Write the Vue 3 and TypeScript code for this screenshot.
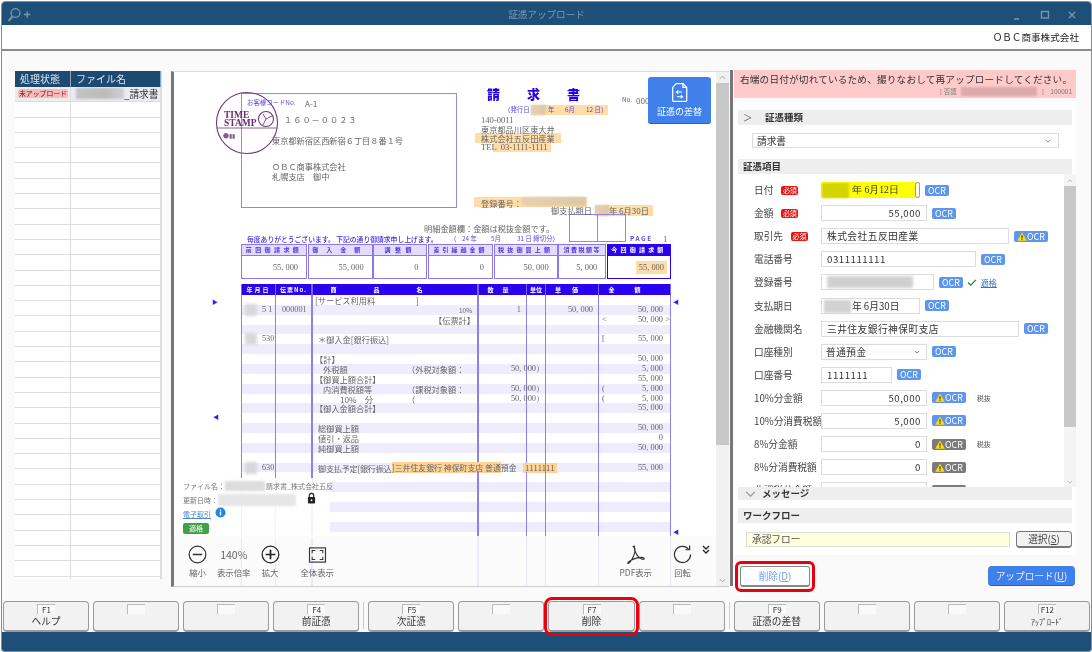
<script setup lang="ts">
type Mark = { x: number; y: number; text: string; kind: string }
type Box = { x: number; y: number; w: number; h: number; kind: string }
type Sum = { title: string; value: string; width: number; track: number; now?: boolean }
type Line = { date?: string; no?: string; name?: string; indent?: number; tax?: string; taxValue?: string; qty?: string; price?: string; open?: string; amount?: string; close?: string; paid?: boolean }
type Field = { label: string; req?: boolean; value?: string; width: number; right?: boolean; warn?: boolean; gray?: boolean; kind?: string; note?: string; valid?: boolean; blur?: number }

const files = Array.from({ length: 32 })

// page coordinates of everything printed on the invoice
const place = (x: number, y: number) => ({ left: `${x - 174}px`, top: `${y - 72}px` })
const size = (b: Box) => ({ ...place(b.x, b.y), width: `${b.w}px`, height: `${b.h}px` })

const boxes: Box[] = [
  { x: 531, y: 105, w: 77, h: 10, kind: 'hi' },
  { x: 531, y: 105, w: 15, h: 10, kind: 'red' },
  { x: 475, y: 133, w: 86, h: 10, kind: 'hi' },
  { x: 493, y: 143, w: 58, h: 9, kind: 'hi' },
  { x: 474, y: 197, w: 113, h: 10, kind: 'hi' },
  { x: 522, y: 197, w: 64, h: 9, kind: 'red' },
  { x: 595, y: 205, w: 58, h: 11, kind: 'hi' },
  { x: 595, y: 205, w: 14, h: 11, kind: 'red' },
  { x: 241, y: 93, w: 216, h: 115, kind: 'frame' },
  { x: 569, y: 214, w: 29, h: 28, kind: 'frame' },
  { x: 597, y: 214, w: 29, h: 28, kind: 'frame' },
]

const marks: Mark[] = [
  { x: 247, y: 103, text: 'お客様コードNo.', kind: 'blue' },
  { x: 305, y: 103, text: 'A-1', kind: 'doc' },
  { x: 284, y: 119, text: '１６０－００２３', kind: 'doc wide' },
  { x: 272, y: 140, text: '東京都新宿区西新宿６丁目８番１号', kind: 'doc' },
  { x: 272, y: 166, text: 'ＯＢＣ商事株式会社', kind: 'doc' },
  { x: 272, y: 176, text: '札幌支店　御中', kind: 'doc' },
  { x: 487, y: 93, text: '請求書', kind: 'title' },
  { x: 504, y: 110, text: '（発行日', kind: 'blue' },
  { x: 548, y: 110, text: '年', kind: 'blue' },
  { x: 565, y: 110, text: '6月', kind: 'blue' },
  { x: 586, y: 110, text: '12 日）', kind: 'blue' },
  { x: 622, y: 100, text: 'No.', kind: 'blue' },
  { x: 636, y: 100, text: '000', kind: 'doc' },
  { x: 481, y: 120, text: '140-0011', kind: 'doc num' },
  { x: 481, y: 129, text: '東京都品川区東大井', kind: 'doc' },
  { x: 481, y: 138, text: '株式会社五反田産業', kind: 'doc' },
  { x: 481, y: 147, text: 'TEL  03-1111-1111', kind: 'doc num' },
  { x: 481, y: 203, text: '登録番号：', kind: 'doc' },
  { x: 551, y: 210, text: '御支払期日', kind: 'doc' },
  { x: 609, y: 210, text: '年 6月30日', kind: 'doc' },
  { x: 424, y: 228, text: '明細金額欄：金額は税抜金額です。', kind: 'doc' },
  { x: 247, y: 239, text: '毎度ありがとうございます。 下記の通り御請求申し上げます。', kind: 'blue bold' },
  { x: 450, y: 239, text: '（', kind: 'blue' },
  { x: 462, y: 239, text: '24 年', kind: 'blue' },
  { x: 491, y: 239, text: '5月', kind: 'blue' },
  { x: 517, y: 239, text: '31 日 締切分）', kind: 'blue' },
  { x: 630, y: 239, text: 'PAGE', kind: 'blue spread' },
  { x: 663, y: 239, text: '1', kind: 'doc num' },
  { x: 212, y: 302, text: '▶', kind: 'tick' },
  { x: 213, y: 417, text: '◀', kind: 'tick' },
  { x: 212, y: 532, text: '▶', kind: 'tick faint' },
  { x: 673, y: 302, text: '◀', kind: 'tick' },
  { x: 673, y: 532, text: '◀', kind: 'tick' },
]

const summary: Sum[] = [
  { title: '前回御請求額', value: '55, 000', width: 66, track: 3.4 },
  { title: '御入金額', value: '55, 000', width: 65, track: 8 },
  { title: '調整額', value: '0', width: 54, track: 4.5 },
  { title: '差引繰越金額', value: '0', width: 65, track: 3 },
  { title: '税抜御買上額', value: '50, 000', width: 64, track: 3.2 },
  { title: '消費税額等', value: '5, 000', width: 48, track: 1.5 },
  { title: '今回御請求額', value: '55, 000', width: 64, track: 3.2, now: true },
]

const heads = [
  { text: '年月日', track: 2 },
  { text: '伝票No.', track: 1 },
  { text: '商品名', track: 37 },
  { text: '数量', track: 9 },
  { text: '単位', track: 0 },
  { text: '単価', track: 11 },
  { text: '金額', track: 20 },
]

const lines: Line[] = [
  { name: '[サービス利用料　　　　　]', indent: 2 },
  { date: '5  1', no: '000001', tax: '10%', qty: '1', price: '50, 000', amount: '50, 000' },
  { name: '【伝票計】', indent: 121, open: '<', amount: '50, 000', close: '>' },
  {},
  { date: '530', name: '＊御入金[銀行振込]', open: '[', amount: '55, 000' },
  {},
  { name: '【計】', indent: 2, amount: '50, 000' },
  { name: '外税額', indent: 10, tax: '（外税対象額：', taxValue: '50, 000）', amount: '5, 000' },
  { name: '【御買上額合計】', indent: 2, amount: '55, 000' },
  { name: '内消費税額等', indent: 10, tax: '（課税対象額：', taxValue: '50, 000）', open: '(', amount: '5, 000' },
  { name: '10%　分', indent: 27, tax: '（', taxValue: '50, 000）', open: '(', amount: '5, 000' },
  { name: '【御入金額合計】', indent: 2, amount: '55, 000' },
  {},
  { name: '総御買上額', amount: '50, 000' },
  { name: '値引・返品', amount: '0' },
  { name: '純御買上額', amount: '50, 000' },
  {},
  { date: '630', name: '御支払予定[銀行振込', paid: true, amount: '55, 000' },
  ...Array.from({ length: 12 }, () => ({})),
]

const fields: Field[] = [
  { label: '日付', req: true, value: '年  6月12日', width: 99, kind: 'date' },
  { label: '金額', req: true, value: '55,000', width: 106, right: true },
  { label: '取引先', req: true, value: '株式会社五反田産業', width: 188, warn: true },
  { label: '電話番号', value: '0311111111', width: 155 },
  { label: '登録番号', width: 113, blur: 86, valid: true },
  { label: '支払期日', value: '年  6月30日', width: 99, kind: 'date2' },
  { label: '金融機関名', value: '三井住友銀行神保町支店', width: 198 },
  { label: '口座種別', value: '普通預金', width: 106, kind: 'select' },
  { label: '口座番号', value: '1111111', width: 71 },
  { label: '10%分金額', value: '50,000', width: 106, right: true, warn: true, note: '税抜' },
  { label: '10%分消費税額', value: '5,000', width: 106, right: true, warn: true },
  { label: '8%分金額', value: '0', width: 106, right: true, warn: true, gray: true, note: '税抜' },
  { label: '8%分消費税額', value: '0', width: 106, right: true, warn: true, gray: true },
  { label: '非課税分金額', value: '0', width: 106, right: true, warn: true, gray: true },
]

const keys = [
  [{ key: 'F1', text: 'ヘルプ' }, { key: '' }, { key: '' }, { key: 'F4', text: '前証憑' }],
  [{ key: 'F5', text: '次証憑' }, { key: '' }, { key: 'F7', text: '削除', hl: true }, { key: '' }],
  [{ key: 'F9', text: '証憑の差替' }, { key: '' }, { key: '' }, { key: 'F12', text: 'ｱｯﾌﾟﾛｰﾄﾞ', small: true }],
]
</script>

<template>
  <div class="window">
    <header class="titlebar">
      <svg class="find" viewBox="0 0 26 16" width="26" height="16" fill="none" stroke="#7d95a9" stroke-width="1.3">
        <circle cx="8.5" cy="6" r="4.4" />
        <path d="M5.5 9.500 1.500 14" stroke-width="2" />
        <path d="M17 7.500h6.500M20.200 4.200v6.600" />
      </svg>
      <span class="caption">証憑アップロード</span>
      <div class="controls">
        <svg viewBox="0 0 70 12" width="70" height="12" fill="none" stroke="#7d95a9" stroke-width="1.4">
          <path d="M1 10h5" />
          <rect x="28.500" y="2.500" width="7" height="6.500" />
          <path d="M56 3l6 6M62 3l-6 6" />
        </svg>
      </div>
    </header>
    <div class="company">ＯＢＣ商事株式会社</div>

    <main class="main">
      <section class="files">
        <div class="file-row head">
          <span>処理状態</span>
          <span>ファイル名</span>
        </div>
        <div class="file-row current">
          <span><em class="status">未アップロード</em></span>
          <span class="file-name"><i class="redact"></i>_請求書</span>
        </div>
        <div v-for="(_, i) in files" :key="i" class="file-row">
          <span></span>
          <span></span>
        </div>
      </section>

      <section class="viewer">
        <div class="paper">
          <div v-for="(b, i) in boxes" :key="i" class="box" :class="b.kind" :style="size(b)"></div>

          <svg class="stamp" viewBox="0 0 64 64" width="64" height="64" fill="none" stroke="#75367f">
            <circle cx="32" cy="32" r="30.500" stroke-width="1.100" />
            <path d="M2 37h60" stroke-width=".8" />
            <circle cx="51" cy="28" r="7.500" stroke-width="1.100" />
            <path d="M51 28l-3-5M51 28l6-3M51 28l-3 6" stroke-width=".9" />
            <text x="9" y="27" class="stamp-text">TIME</text>
            <text x="9" y="35" class="stamp-text">STAMP</text>
            <text x="8" y="47" class="stamp-small">●▮▮</text>
          </svg>

          <span v-for="(m, i) in marks" :key="i" class="mark" :class="m.kind" :style="place(m.x, m.y)">{{ m.text }}</span>

          <div class="summary">
            <div v-for="s in summary" :key="s.title" class="sum" :class="{ now: s.now }" :style="{ width: `${s.width}px` }">
              <div class="sum-title" :style="{ letterSpacing: `${s.track}px` }">{{ s.title }}</div>
              <div class="sum-value"><b>{{ s.value }}</b></div>
            </div>
          </div>

          <div class="detail">
            <div class="detail-row detail-head">
              <span v-for="h in heads" :key="h.text" :style="{ letterSpacing: `${h.track}px` }">{{ h.text }}</span>
            </div>
            <div v-for="(l, i) in lines" :key="i" class="detail-row" :class="{ striped: i % 2 === 1 && i < 25 }">
              <span class="date"><i v-if="l.date" class="date-red"></i>{{ l.date }}</span>
              <span class="ctr">{{ l.no }}</span>
              <span class="name" :class="{ squeeze: l.paid }" :style="{ paddingLeft: `${l.indent ?? 5}px` }">
                {{ l.name }}<em v-if="l.tax" class="tax" :class="{ pct: l.tax === '10%' }">{{ l.tax }}</em>
                <em v-if="l.paid" class="paid"><b>]三井住友銀行 神保町支店 普通</b>預金</em>
              </span>
              <span class="num">{{ l.qty }}<em v-if="l.taxValue" class="tax-value">{{ l.taxValue }}</em><b v-if="l.paid" class="acct">1111111</b></span>
              <span></span>
              <span class="num">{{ l.price }}</span>
              <span class="num amount"><em v-if="l.open" class="open">{{ l.open }}</em>{{ l.amount }}<em v-if="l.close" class="close">{{ l.close }}</em></span>
            </div>
          </div>
        </div>

        <button class="swap">
          <svg viewBox="0 0 20 24" width="17" height="21" fill="none" stroke="#fff" stroke-width="1.500">
            <path d="M6 1.500h8l4.500 4.500v15a1.500 1.500 0 0 1-1.500 1.500H3.500A1.500 1.500 0 0 1 2 21V6z" />
            <path d="M14 1.500V6h4.500" />
            <path d="M13 11.500H6.500l2-2M6.500 11.500l2 2M7 17h6.500l-2-2M13.500 17l-2 2" stroke-width="1.200" />
          </svg>
          <span>証憑の差替</span>
        </button>

        <div class="doc-info">
          <p><span>ファイル名：</span><i class="redact name-red"></i><span>請求書_株式会社五反</span></p>
          <p><span>更新日時：</span><i class="redact date-info"></i>
            <svg class="lock" viewBox="0 0 10 13" width="9" height="12"><path d="M2.500 6V3.800a2.500 2.500 0 0 1 5 0V6" fill="none" stroke="#222" stroke-width="1.300" /><rect x="1" y="5.500" width="8" height="7" rx="1" fill="#222" /><circle cx="5" cy="9" r="1" fill="#fff" /></svg>
          </p>
          <p><a class="trade">電子取引</a>
            <svg class="info" viewBox="0 0 12 12" width="11" height="11"><circle cx="6" cy="6" r="5.500" fill="#1e88e5" /><path d="M6 5v4M6 2.800v1.200" stroke="#fff" stroke-width="1.400" /></svg>
          </p>
          <p><em class="qualified">適格</em></p>
        </div>

        <div class="tools">
          <div class="tool">
            <svg viewBox="0 0 20 20" width="19" height="19" fill="none" stroke="#333" stroke-width="1.300"><circle cx="10" cy="10" r="8.800" /><path d="M5 10h10" stroke-width="1.800" /></svg>
            <span>縮小</span>
          </div>
          <div class="tool rate"><strong>140%</strong><span>表示倍率</span></div>
          <div class="tool">
            <svg viewBox="0 0 20 20" width="19" height="19" fill="none" stroke="#222" stroke-width="1.300"><circle cx="10" cy="10" r="8.800" /><path d="M5 10h10M10 5v10" stroke-width="1.800" /></svg>
            <span>拡大</span>
          </div>
          <div class="tool fit">
            <svg viewBox="0 0 20 18" width="19" height="16" fill="none" stroke="#333"><rect x="1" y="1" width="18" height="16" stroke-width="1.300" /><path d="M4 7V4h3.500M12.500 4H16v3M16 11v3h-3.500M7.500 14H4v-3" stroke-width="1.200" /></svg>
            <span>全体表示</span>
          </div>
          <div class="spacer"></div>
          <div class="tool">
            <svg viewBox="0 0 20 20" width="19" height="19" fill="none" stroke="#333" stroke-width="1.200"><path d="M9.500 1.500c-1 0-.8 2.500.5 6 1.400 3.500 3 5.500 6 7 2 1 3.500.5 3-.5-.6-1-3.500-1.200-7-.5-4 .8-7 2.300-9 4-1.200 1-1.500 2-.5 1.800 1.500-.3 3.500-3.500 5.500-7.800 1.600-3.600 2.500-10-1-10z" /></svg>
            <span>PDF表示</span>
          </div>
          <div class="tool rotate">
            <svg viewBox="0 0 20 20" width="19" height="19" fill="none" stroke="#333" stroke-width="1.300"><path d="M16.500 4.500A8.500 8.500 0 1 0 18.500 10" /><path d="M17.500 .5v4.500H13" /></svg>
            <span>回転</span>
          </div>
          <svg class="more" viewBox="0 0 8 9" width="8" height="9" fill="none" stroke="#222" stroke-width="1.300"><path d="M1 1l3 3 3-3M1 5l3 3 3-3" /></svg>
        </div>

        <div class="doc-scroll">
          <svg viewBox="0 0 8 5" width="7" height="5" fill="none" stroke="#999"><path d="M1 4l3-3 3 3" /></svg>
          <i class="thumb"></i>
          <svg class="down" viewBox="0 0 8 5" width="7" height="5" fill="none" stroke="#999"><path d="M1 1l3 3 3-3" /></svg>
        </div>
      </section>

      <section class="side">
        <div class="alert">
          <p>右端の日付が切れているため、撮りなおして再アップロードしてください。</p>
          <small>[ 否認 <i class="redact"></i> ]　100001</small>
        </div>

        <div class="card">
          <h3 class="bar"><span class="gt">＞</span>証憑種類</h3>
          <div class="kind-select">
            <span>請求書</span>
            <svg viewBox="0 0 8 5" width="6" height="4" fill="none" stroke="#555"><path d="M1 1l3 3 3-3" /></svg>
          </div>
          <h3 class="bar plain">証憑項目</h3>

          <div class="form">
            <div class="form-scroll">
              <div v-for="f in fields" :key="f.label" class="field">
                <label>
                  <span class="label-text">{{ f.label }}</span>
                  <em v-if="f.req" class="req">必須</em>
                </label>
                <div class="input" :class="[f.kind, { right: f.right }]" :style="{ width: `${f.width}px` }">
                  <i v-if="f.kind === 'date' || f.kind === 'date2'" class="date-blur"></i>
                  <i v-if="f.blur" class="value-blur" :style="{ width: `${f.blur}px` }"></i>
                  <span>{{ f.value }}</span>
                  <i v-if="f.kind === 'date'" class="spin"></i>
                  <svg v-if="f.kind === 'select'" viewBox="0 0 8 5" width="6" height="4" fill="none" stroke="#555"><path d="M1 1l3 3 3-3" /></svg>
                </div>
                <span class="ocr" :class="{ gray: f.gray }">
                  <svg v-if="f.warn" viewBox="0 0 12 11" width="10" height="9"><path d="M6 .5 11.800 10.800H.2z" fill="#ffdf00" /><path d="M6 4v3.500M6 8.300v1.200" stroke="#222" stroke-width="1.300" /></svg>OCR
                </span>
                <span v-if="f.note" class="note">{{ f.note }}</span>
                <template v-if="f.valid">
                  <svg class="check" viewBox="0 0 11 8" width="10" height="7" fill="none" stroke="#1b8a3a" stroke-width="1.500"><path d="M1 4l3 3 6-6" /></svg>
                  <a class="valid">適格</a>
                </template>
              </div>
            </div>
            <div class="form-bar">
              <svg viewBox="0 0 8 5" width="6" height="4" fill="none" stroke="#aaa"><path d="M1 4l3-3 3 3" /></svg>
              <i class="thumb"></i>
              <svg class="down" viewBox="0 0 8 5" width="6" height="4" fill="none" stroke="#aaa"><path d="M1 1l3 3 3-3" /></svg>
            </div>
          </div>

          <h3 class="bar msg"><svg viewBox="0 0 12 7" width="11" height="6" fill="none" stroke="#999" stroke-width="1.500"><path d="M1 1l5 5 5-5" /></svg>メッセージ</h3>
          <h3 class="bar plain flow">ワークフロー</h3>
          <div class="flow-row">
            <div class="flow-name">承認フロー</div>
            <button class="pick">選択(<u>S</u>)</button>
          </div>
        </div>

        <div class="actions">
          <div class="danger">
            <button class="remove">削除(<u>D</u>)</button>
          </div>
          <button class="upload">アップロード(<u>U</u>)</button>
        </div>
      </section>
    </main>

    <footer class="fkeys">
      <template v-for="(group, g) in keys" :key="g">
        <i v-if="g > 0" class="sep"></i>
        <div v-for="(k, i) in group" :key="i" class="fkey" :class="{ hl: k.hl }">
          <span class="cap">{{ k.key }}</span>
          <span class="fkey-text" :class="{ small: k.small }">{{ k.text }}</span>
        </div>
      </template>
    </footer>
    <div class="statusbar"></div>
  </div>
</template>

<style>
html,
body {
  margin: 0;
  background: #fff;
  overflow: hidden;
}
</style>

<style scoped>
.window {
  box-sizing: border-box;
  width: 1091px;
  height: 651px;
  margin: 1px 0 0 1px;
  display: flex;
  flex-direction: column;
  overflow: hidden;
  border: 1px solid #8c8c8c;
  border-radius: 4px 4px 3px 3px;
  background: #fafafa;
  color: #333;
  font-family: "Noto Sans CJK JP", "Noto Sans", sans-serif;
  font-size: 9.7px;
  filter: blur(0.3px);
}

p,
h3 {
  margin: 0;
}

em,
i {
  font-style: normal;
}

button {
  font: inherit;
  padding: 0;
}

.redact {
  display: inline-block;
  flex: none;
  background: linear-gradient(90deg, #c4c4c4, #bbb 60%, #d0d0d0);
  filter: blur(1px);
}

.titlebar {
  position: relative;
  flex: none;
  height: 23px;
  display: flex;
  align-items: center;
  justify-content: center;
  background: #1e4f78;
}

.find {
  position: absolute;
  left: 5px;
  top: 5px;
}

.caption {
  color: #7f9bb2;
  font-size: 9.6px;
}

.controls {
  position: absolute;
  right: 8px;
  top: 7px;
  display: flex;
}

.company {
  flex: none;
  height: 24px;
  padding-right: 12px;
  border-bottom: 2px solid #8a8a8a;
  background: #fff;
  line-height: 24px;
  text-align: right;
  font-size: 9.6px;
  color: #222;
}

.main {
  flex: none;
  height: 546px;
  display: flex;
  align-items: flex-start;
  padding: 20px 0 0 13px;
  box-sizing: border-box;
  background: #fafafa;
}

/* file list */
.files {
  flex: none;
  width: 147px;
  height: 508px;
  overflow: hidden;
  background: #fff;
  border-right: 1px solid #ddd;
  box-sizing: border-box;
}

.file-row {
  display: grid;
  grid-template-columns: 56px 1fr;
  height: 15.3px;
  box-sizing: border-box;
  border-bottom: 1.5px solid #ddd;
}

.file-row > span {
  border-right: 1px solid #ddd;
  border-left: 1px solid #ddd;
  margin-left: -1px;
  overflow: hidden;
  white-space: nowrap;
}

.file-row.head {
  height: 16px;
  background: #1c4a73;
  color: #dbe5ee;
  border: 0;
  font-size: 10px;
  line-height: 15px;
}

.file-row.head > span {
  padding-left: 5px;
  border-color: #8fa5b8;
  border-left: 0;
  margin: 0;
}

.file-row.current {
  background: #ebebf2;
  line-height: 14px;
}

.status {
  display: block;
  margin: 2px 2px 0 3px;
  height: 9px;
  border-radius: 2px;
  background: #ffb8b4;
  color: #3a2a2a;
  font-size: 6.9px;
  line-height: 9px;
  text-align: center;
}

.file-name {
  display: flex;
  padding-left: 5px;
  color: #333;
}

.file-name .redact {
  width: 48px;
  height: 11px;
  margin-top: 1px;
}

/* document viewer */
.viewer {
  position: relative;
  flex: none;
  width: 558px;
  height: 516px;
  margin-left: 9px;
  box-sizing: border-box;
  border-left: 3px solid #777;
  border-top: 1px solid #ddd;
  border-bottom: 1px solid #ccc;
  background: #fff;
  overflow: hidden;
}

.paper {
  position: relative;
  width: 542px;
  height: 515px;
  overflow: hidden;
  background: #fff;
}

.box {
  position: absolute;
}

.box.hi {
  background: #ffdca8;
}

.box.red {
  background: linear-gradient(90deg, #e6d0b0, #dcc8a8);
  filter: blur(1px);
}

.box.frame {
  box-sizing: border-box;
  border: 1.2px solid #9a85e6;
}

.stamp {
  position: absolute;
  left: 41px;
  top: 19px;
}

.stamp-text {
  fill: #6a2a78;
  stroke: none;
  font-family: "Liberation Serif", serif;
  font-weight: 700;
  font-size: 9.5px;
}

.stamp-small {
  fill: #8a5a94;
  stroke: none;
  font-size: 6px;
}

.mark {
  position: absolute;
  transform: translateY(-50%);
  white-space: pre;
  line-height: 1;
}

.mark.doc {
  color: #666;
  font-size: 8.2px;
}

.mark.num {
  font-family: "Liberation Serif", serif;
  font-size: 8.6px;
}

.mark.wide {
  letter-spacing: 1px;
}

.mark.blue {
  color: #5a48e0;
  font-size: 6.4px;
}

.mark.bold {
  color: #3c2ce8;
  font-size: 6.8px;
  font-weight: 500;
}

.mark.spread {
  letter-spacing: 1.6px;
  font-weight: 700;
}

.mark.title {
  color: #2a00e8;
  font-size: 13px;
  font-weight: 900;
  letter-spacing: 27px;
}

.mark.tick {
  color: #3a20e8;
  font-size: 6px;
}

.mark.faint {
  opacity: .3;
}

.summary {
  position: absolute;
  left: 67px;
  top: 172px;
  display: flex;
  width: 430px;
  height: 35px;
  justify-content: space-between;
}

.sum {
  flex: none;
  box-sizing: border-box;
  border: 1.3px solid #8d78e8;
}

.sum-title {
  height: 10px;
  border-bottom: 1.3px solid #8d78e8;
  background: #e3dcff;
  color: #4a38e0;
  font-size: 6px;
  line-height: 10px;
  font-weight: 700;
  text-align: center;
  white-space: nowrap;
  overflow: hidden;
}

.sum.now {
  border-color: #2a00f0;
}

.sum.now .sum-title {
  background: #2a00f0;
  border-color: #2a00f0;
  color: #fff;
}

.sum-value {
  height: 22px;
  padding-right: 6px;
  text-align: right;
  line-height: 23px;
  font-family: "Liberation Serif", serif;
  font-size: 8.4px;
  color: #666;
}

.sum-value b {
  font-weight: 400;
  padding: 2px;
}

.sum.now .sum-value {
  padding-right: 3px;
}

.sum.now .sum-value b {
  background: #ffdca8;
  padding: 2px 3px;
}

.detail {
  position: absolute;
  left: 67px;
  top: 212px;
  width: 430px;
  color: #666;
  font-size: 8.2px;
}

.detail-row {
  display: grid;
  grid-template-columns: 35px 37px 166px 48px 19px 53px 72px;
  height: 9.87px;
  line-height: 10px;
  white-space: nowrap;
}

.detail-row > span {
  position: relative;
  box-sizing: border-box;
  border-right: 1.3px solid #937ee6;
}

.detail-row > span:first-child {
  border-left: 1.3px solid #937ee6;
}

.detail-row > span:nth-child(2),
.detail-row > span:nth-child(3) {
  border-right-width: 2px;
}

.detail-row > span:nth-child(5) {
  border-right-width: 1.6px;
}

.detail-row.striped {
  background: #efecfd;
}

.detail-head {
  height: 11px;
  background: #2a00f0;
  color: #fff;
  font-size: 6px;
  font-weight: 700;
  line-height: 11px;
  text-align: center;
}

.detail-head > span {
  border-color: #7d63f5 !important;
  overflow: hidden;
}

.date {
  padding-left: 20px;
  font-family: "Liberation Serif", serif;
}

.date-red {
  position: absolute;
  left: 3px;
  top: -1px;
  width: 12px;
  height: 12px;
  background: #d8d8d8;
  filter: blur(1.5px);
}

.ctr {
  padding-left: 6px;
  font-family: "Liberation Serif", serif;
}

.squeeze {
  letter-spacing: -.3px;
}

.tax {
  position: absolute;
  left: 94px;
  top: 0;
}

.tax.pct {
  left: 146px;
  font-size: 6.5px;
}

.paid {
  position: absolute;
  left: 79px;
  top: 0;
  letter-spacing: 0;
  font-size: 7.9px;
  white-space: pre;
}

.paid b,
.acct {
  background: #ffd396;
  font-weight: 400;
}

.acct {
  position: absolute;
  left: 44px;
  top: 0;
  padding: 0 2px;
  font-family: "Noto Sans CJK JP", sans-serif;
  font-size: 7.6px;
}

.num {
  padding-right: 5px;
  text-align: right;
  font-family: "Liberation Serif", serif;
  font-size: 8.4px;
}

.num.amount {
  padding-right: 7px;
}

.tax-value {
  position: absolute;
  right: -18px;
  top: 0;
}

.open {
  position: absolute;
  left: 3px;
  top: 0;
}

.close {
  position: absolute;
  right: 0;
  top: 0;
}

.swap {
  position: absolute;
  left: 474px;
  top: 5px;
  width: 63px;
  height: 47px;
  display: flex;
  flex-direction: column;
  align-items: center;
  gap: 2px;
  padding-top: 5px;
  border: 0;
  border-bottom: 1px solid #2b62b8;
  border-radius: 3px;
  background: #3f80ea;
  color: #fff;
  font-size: 9px;
}

.doc-info {
  position: absolute;
  left: 0;
  top: 406px;
  width: 156px;
  height: 60px;
  padding: 1px 0 0 9px;
  box-sizing: border-box;
  background: rgba(255, 255, 255, .9);
  color: #777;
  font-size: 7px;
  white-space: nowrap;
}

.doc-info p {
  position: relative;
  display: flex;
  align-items: center;
  height: 14px;
}

.name-red {
  width: 40px;
  height: 10px;
  margin-right: 1px;
  background: #dcdcdc;
}

.date-info {
  width: 78px;
  height: 12px;
  background: #e6e6e6;
}

.lock {
  margin-left: 11px;
  margin-top: -4px;
}

.trade {
  color: #4a86c5;
  text-decoration: underline;
}

.info {
  margin: -3px 0 0 4px;
}

.qualified {
  display: block;
  width: 26px;
  height: 11px;
  border-radius: 2px;
  background: #43a047;
  color: #fff;
  text-align: center;
  line-height: 11px;
}

.tools {
  position: absolute;
  left: 0;
  right: 13px;
  bottom: 0;
  height: 50px;
  display: flex;
  gap: 10px;
  padding-left: 14px;
  box-sizing: border-box;
  background: rgba(251, 251, 251, .88);
  font-size: 8.4px;
  color: #666;
}

.tool {
  display: flex;
  flex-direction: column;
  align-items: center;
  gap: 2px;
  padding-top: 9px;
}

.tool span {
  line-height: 13px;
}

.tool.rate strong {
  height: 19px;
  font-weight: 400;
  font-size: 10.5px;
  line-height: 19px;
}

.tool.fit {
  margin-left: 11px;
}

.tool.fit svg {
  margin: 1.5px 0;
}

.spacer {
  flex: 1;
}

.tool.rotate {
  margin-left: 11px;
}

.more {
  margin: 9px 6px 0 0;
}

.doc-scroll {
  position: absolute;
  top: 0;
  right: 0;
  bottom: 0;
  width: 13px;
  display: flex;
  flex-direction: column;
  align-items: center;
  padding-top: 3px;
  box-sizing: border-box;
  background: #f1f1f1;
}

.doc-scroll .thumb {
  width: 13px;
  height: 362px;
  margin-top: 3px;
  background: #c8c8c8;
}

.down {
  margin-top: auto;
  margin-bottom: 3px;
}

/* right panel */
.side {
  position: relative;
  flex: none;
  width: 346px;
  margin-left: 1px;
  margin-top: -1px;
  padding-left: 4px;
  height: 522px;
  box-sizing: border-box;
}

.side::before {
  content: "";
  position: absolute;
  left: 0;
  top: 0;
  bottom: 6px;
  width: 3px;
  background: #777;
}

.alert {
  height: 28px;
  background: #ffcaca;
  padding: 2px 0 0 6px;
  box-sizing: border-box;
  color: #333;
}

.alert p {
  font-size: 9.65px;
  letter-spacing: .18px;
  line-height: 14px;
  white-space: nowrap;
}

.alert small {
  display: flex;
  align-items: center;
  justify-content: flex-end;
  height: 10px;
  padding-right: 4px;
  color: #777;
  font-size: 6.5px;
  white-space: pre;
}

.alert .redact {
  width: 76px;
  height: 9px;
  margin: 0 3px;
  background: #dcaaaa;
}

.card {
  margin-top: 3px;
  height: 454px;
  width: 342px;
  background: #fff;
  padding: 9px 4px 0;
  box-sizing: border-box;
}

.bar {
  height: 15px;
  background: #eee;
  color: #333;
  font-size: 9.5px;
  font-weight: 700;
  line-height: 15px;
}

.bar.plain {
  padding-left: 5px;
}

.gt {
  display: inline-block;
  width: 27px;
  padding-left: 5px;
  box-sizing: border-box;
  color: #666;
  font-weight: 400;
}

.kind-select {
  width: 307px;
  height: 15px;
  margin: 8px 0 11px 14px;
  padding: 0 7px 0 4px;
  box-sizing: border-box;
  display: flex;
  justify-content: space-between;
  align-items: center;
  border: 1.3px solid #ddd;
  background: #fff;
}

.form {
  position: relative;
  height: 313px;
  width: 338px;
  overflow: hidden;
}

.form-scroll {
  padding: 4.5px 0 0 16px;
}

.field {
  display: flex;
  align-items: center;
  height: 23.1px;
  white-space: nowrap;
}

.field label {
  flex: none;
  width: 67px;
  display: flex;
  align-items: center;
  overflow: hidden;
  color: #444;
}

.label-text {
  flex: none;
}

.req {
  margin-left: 8px;
  width: 17px;
  height: 9px;
  border-radius: 2px;
  background: #e11;
  color: #fff;
  font-size: 7px;
  line-height: 9px;
  text-align: center;
}

.input {
  position: relative;
  flex: none;
  height: 16px;
  padding: 0 5px;
  box-sizing: border-box;
  display: flex;
  align-items: center;
  border: 1.3px solid #dcdcdc;
  background: #fff;
  letter-spacing: .5px;
  color: #333;
}

.input.right {
  justify-content: flex-end;
}

.input.date {
  background: #ff0;
  padding-left: 30px;
  letter-spacing: 0;
  border-color: #ff0;
}

.input.date2 {
  padding-left: 30px;
  letter-spacing: 0;
}

.input.select {
  justify-content: space-between;
  padding-left: 4px;
  padding-right: 6px;
}

.date-blur {
  position: absolute;
  left: 2px;
  top: 1px;
  width: 27px;
  height: 13px;
  background: #d2d2d2;
  filter: blur(1px);
}

.input.date .date-blur {
  left: 0;
  top: 0;
  height: 15px;
  background: #d4d400;
}

.spin {
  position: absolute;
  right: -1px;
  top: -1px;
  width: 5px;
  height: 16px;
  box-sizing: border-box;
  border: 1.2px solid #999;
  border-radius: 3px;
  background: #fff;
}

.value-blur {
  position: absolute;
  left: 5px;
  top: 1px;
  height: 12px;
  background: #d0d0d0;
  filter: blur(1.5px);
}

.ocr {
  flex: none;
  display: flex;
  align-items: center;
  height: 11px;
  margin-left: 5px;
  padding: 0 3px;
  border-radius: 2px;
  background: #5e96ee;
  color: #fff;
  font-size: 8.8px;
}

.ocr.gray {
  background: #7b7b7b;
}

.note {
  margin-left: 11px;
  font-size: 7px;
  color: #555;
}

.check {
  margin-left: 4px;
}

.valid {
  margin-left: 4px;
  color: #3a76b5;
  font-size: 8px;
  text-decoration: underline;
}

.form-bar {
  position: absolute;
  right: 0;
  top: 0;
  bottom: 0;
  width: 12px;
  display: flex;
  flex-direction: column;
  align-items: center;
  padding-top: 5px;
  box-sizing: border-box;
  background: #f4f4f4;
}

.form-bar .thumb {
  width: 12px;
  height: 241px;
  margin-top: 3px;
  background: #c8c8c8;
}

.bar.msg {
  display: flex;
  align-items: center;
  gap: 6px;
  height: 13px;
  padding-left: 7px;
}

.bar.flow {
  margin-top: 8px;
}

.flow-row {
  display: flex;
  justify-content: space-between;
  align-items: center;
  margin-top: 8px;
  padding-left: 8px;
}

.flow-name {
  width: 264px;
  height: 15px;
  padding-left: 5px;
  box-sizing: border-box;
  border: 1px solid #ddd;
  background: #ffffdc;
  color: #555;
  line-height: 13px;
}

.pick {
  width: 56px;
  height: 17px;
  border: 1.2px solid #777;
  border-bottom-width: 2px;
  border-radius: 4px;
  background: #f2f2f2;
  color: #444;
}

.actions {
  display: flex;
  justify-content: space-between;
  align-items: flex-start;
  margin-top: 6px;
  padding: 0 1px 0 1px;
  width: 342px;
  box-sizing: border-box;
}

.danger {
  padding: 2px;
  border: 3px solid #e8000d;
  border-radius: 6px;
}

.remove {
  display: block;
  width: 70px;
  height: 21px;
  border: 1.2px solid #888;
  border-bottom-width: 2px;
  border-radius: 3px;
  background: #fff;
  color: #6f9fe8;
}

.upload {
  width: 87px;
  height: 20px;
  margin-top: 5px;
  border: 0;
  border-bottom: 1px solid #2b62b8;
  border-radius: 4px;
  background: #3f80ea;
  color: #e6efff;
}

/* function keys */
.fkeys {
  flex: none;
  height: 35px;
  display: flex;
  gap: 4px;
  padding: 4px 1px 0;
  box-sizing: border-box;
  background: #fafafa;
}

.sep {
  flex: none;
  width: 1px;
  height: 27px;
  margin-top: 1px;
  background: #ccc;
}

.fkey {
  position: relative;
  flex: 1;
  height: 31px;
  box-sizing: border-box;
  display: flex;
  flex-direction: column;
  align-items: center;
  border: 1.2px solid #9a9a9a;
  border-bottom-width: 2px;
  border-radius: 4px;
  background: #f2f2f2;
  color: #333;
}

.fkey.hl {
  outline: 3px solid #e8000d;
  outline-offset: 1px;
}

.cap {
  width: 18px;
  height: 10px;
  margin-top: 2px;
  box-sizing: border-box;
  border-top: 1px solid #bbb;
  border-left: 1px solid #bbb;
  background: #fafafa;
  font-size: 8px;
  line-height: 9px;
  text-align: center;
}

.fkey-text {
  line-height: 15px;
}

.fkey-text.small {
  font-size: 8px;
}

.statusbar {
  flex: 1;
  background: #1e4f78;
}
</style>
